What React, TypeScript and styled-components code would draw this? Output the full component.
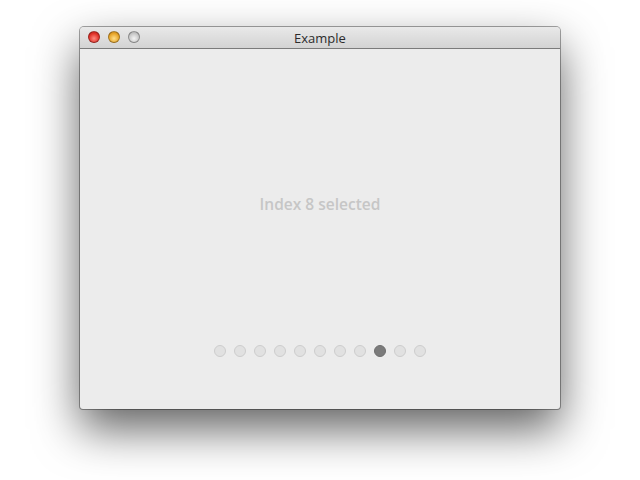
import React from 'react';
import styled, {createGlobalStyle} from "styled-components";

const GlobalStyle = createGlobalStyle`
  html, body {
    margin: 0;
    padding: 0;
    background: #ffffff;
  }
`

const Page = styled.div`
  width: 640px;
  height: 480px;
  display: flex;
  justify-content: center;
  padding-top: 27px;
  box-sizing: border-box;
  overflow: hidden;
`;

const Window = styled.div`
  width: 480px;
  height: 382px;
  display: flex;
  flex-direction: column;
  border-radius: 4px 4px 3px 3px;
  background: #ececec;
  box-shadow: 0 0 0 1px rgba(0, 0, 0, 0.35), 0 20px 46px rgba(0, 0, 0, 0.62);
  overflow: hidden;
`;

const TitleBar = styled.div`
  position: relative;
  height: 21px;
  flex: none;
  display: flex;
  align-items: center;
  justify-content: center;
  background: linear-gradient(#e9e9e9, #d3d3d3);
  border-bottom: 1px solid #7b7b7b;
  font-family: "Open Sans", "DejaVu Sans", sans-serif;
  font-size: 13px;
  color: #2c2c2c;
`;

const Lights = styled.div`
  position: absolute;
  left: 8px;
  top: 4px;
  display: flex;
  gap: 8px;
`;

const Light = styled.span<{ $color: string }>`
  width: 12px;
  height: 12px;
  border-radius: 50%;
  box-sizing: border-box;
  border: 1px solid rgba(0, 0, 0, 0.3);
  background: ${({$color}) => $color};
`;

const Content = styled.div`
  flex: 1;
  display: flex;
  flex-direction: column;
  align-items: center;
  padding-top: 145px;
`;

const Label = styled.div`
  font-family: "Open Sans", "DejaVu Sans", sans-serif;
  font-weight: 600;
  font-size: 15.5px;
  line-height: 20px;
  color: #c6c6c6;
`;

const Dots = styled.div`
  margin-top: 131px;
  display: flex;
  gap: 8px;
`;

const Dot = styled.span<{ $active: boolean }>`
  width: 12px;
  height: 12px;
  border-radius: 50%;
  box-sizing: border-box;
  border: 1px solid ${({$active}) => $active ? '#6e6e6e' : '#cdcdcd'};
  background: ${({$active}) => $active ? '#7b7b7b' : '#e1e1e1'};
`;

const selected = 8;

const App = () => {
    return (
        <Page>
            <GlobalStyle/>
            <Window>
                <TitleBar>
                    <Lights>
                        <Light $color="radial-gradient(circle at 50% 65%, #ff8a80, #e0322a 60%, #b41f18)"/>
                        <Light $color="radial-gradient(circle at 50% 65%, #ffe08a, #e7a52a 60%, #b97a12)"/>
                        <Light $color="radial-gradient(circle at 50% 65%, #f4f4f4, #c8c8c8 60%, #9f9f9f)"/>
                    </Lights>
                    Example
                </TitleBar>
                <Content>
                    <Label>Index {selected} selected</Label>
                    <Dots>
                        {Array.from({length: 11}).map((_, i) => (
                            <Dot key={i} $active={i === selected}/>
                        ))}
                    </Dots>
                </Content>
            </Window>
        </Page>
    )
}

export default App;
